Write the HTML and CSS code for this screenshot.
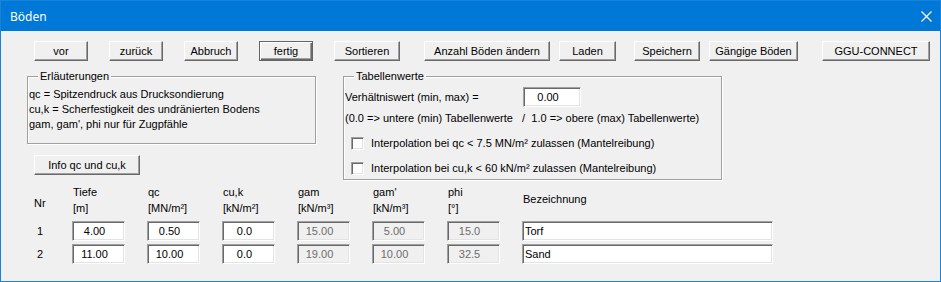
FILE: index.html
```html
<!DOCTYPE html>
<html lang="de">
<head>
    <meta charset="UTF-8">
    <title>Böden</title>
    <link rel="stylesheet" href="styles.css">
</head>
<body>
    <div class="window">
        <div class="titlebar">
            <span class="title">Böden</span>
            <svg class="close" width="11" height="11" viewBox="0 0 11 11">
                <path d="M0.5 0.5 L10.5 10.5 M10.5 0.5 L0.5 10.5" stroke="#fff" stroke-width="1.1" fill="none"/>
            </svg>
        </div>

        <div class="client">
            <div class="toolbar">
                <button class="btn btn-vor">vor</button>
                <button class="btn btn-back">zurück</button>
                <button class="btn btn-cancel">Abbruch</button>
                <button class="btn btn-done is-default">fertig</button>
                <button class="btn btn-sort">Sortieren</button>
                <button class="btn btn-count">Anzahl Böden ändern</button>
                <button class="btn btn-load">Laden</button>
                <button class="btn btn-save">Speichern</button>
                <button class="btn btn-common">Gängige Böden</button>
                <button class="btn btn-connect">GGU-CONNECT</button>
            </div>

            <div class="middle">
                <div class="left-col">
                    <div class="group notes">
                        <span class="group-title">Erläuterungen</span>
                        <div class="line">qc = Spitzendruck aus Drucksondierung</div>
                        <div class="line">cu,k = Scherfestigkeit des undränierten Bodens</div>
                        <div class="line">gam, gam', phi nur für Zugpfähle</div>
                    </div>
                    <button class="btn btn-info">Info qc und cu,k</button>
                </div>

                <div class="group table-values">
                    <span class="group-title">Tabellenwerte</span>
                    <div class="ratio-row">
                        <span class="ratio-label">Verhältniswert (min, max) =</span>
                        <input class="field num ratio" type="text" value="0.00">
                    </div>
                    <div class="line hint">(0.0 =&gt; untere (min) Tabellenwerte &nbsp; / &nbsp;1.0 =&gt; obere (max) Tabellenwerte)</div>
                    <label class="check-row first">
                        <span class="checkbox"></span>
                        Interpolation bei qc &lt; 7.5 MN/m² zulassen (Mantelreibung)
                    </label>
                    <label class="check-row">
                        <span class="checkbox"></span>
                        Interpolation bei cu,k &lt; 60 kN/m² zulassen (Mantelreibung)
                    </label>
                </div>
            </div>

            <div class="soil-table">
                <div class="head head-nr">Nr</div>
                <div class="head">Tiefe<br>[m]</div>
                <div class="head">qc<br>[MN/m²]</div>
                <div class="head">cu,k<br>[kN/m²]</div>
                <div class="head">gam<br>[kN/m³]</div>
                <div class="head">gam'<br>[kN/m³]</div>
                <div class="head">phi<br>[°]</div>
                <div class="head head-name">Bezeichnung</div>

                <div class="row-nr">1</div>
                <input class="field num" type="text" value="4.00">
                <input class="field num" type="text" value="0.50">
                <input class="field num" type="text" value="0.0">
                <input class="field num" type="text" value="15.00" disabled>
                <input class="field num" type="text" value="5.00" disabled>
                <input class="field num" type="text" value="15.0" disabled>
                <input class="field name" type="text" value="Torf">

                <div class="row-nr">2</div>
                <input class="field num" type="text" value="11.00">
                <input class="field num" type="text" value="10.00">
                <input class="field num" type="text" value="0.0">
                <input class="field num" type="text" value="19.00" disabled>
                <input class="field num" type="text" value="10.00" disabled>
                <input class="field num" type="text" value="32.5" disabled>
                <input class="field name" type="text" value="Sand">
            </div>
        </div>
    </div>
</body>
</html>
```

FILE: styles.css
```css
body {
    margin: 0;
    font-family: "Liberation Sans", Arial, sans-serif;
    font-size: 11px;
    color: #000;
    background-color: #f0f0f0;
}
.window {
    width: 941px;
    height: 282px;
    box-sizing: border-box;
    border: 1px solid #1883d7;
    display: flex;
    flex-direction: column;
}
.titlebar {
    height: 30px;
    background-color: #0078d7;
    display: flex;
    align-items: center;
    padding-left: 9px;
}
.title {
    color: #fff;
    font-family: "Noto Sans", "Open Sans", sans-serif;
    font-size: 12px;
}
.close {
    margin-left: auto;
    margin-right: 8px;
}
.client {
    flex: 1;
    background-color: #f0f0f0;
}

/* classic 3d buttons */
.btn {
    height: 20px;
    margin: 0;
    padding: 0;
    font-family: inherit;
    font-size: 11px;
    color: #000;
    background-color: #f0f0f0;
    border: 1px solid;
    border-color: #fff #696969 #696969 #fff;
    box-shadow: inset -1px -1px 0 #a0a0a0;
    box-sizing: border-box;
}
.btn.is-default {
    border-color: #646464;
    box-shadow: inset 1px 1px 0 #fff, inset -1px -1px 0 #696969, inset -2px -2px 0 #a0a0a0;
}
.toolbar {
    display: flex;
    padding-left: 33px;
    margin-top: 10px;
}
.btn-vor { width: 54px; }
.btn-back { width: 54px; margin-left: 21px; }
.btn-cancel { width: 54px; margin-left: 21px; }
.btn-done { width: 54px; margin-left: 21px; }
.btn-sort { width: 66px; margin-left: 21px; }
.btn-count { width: 126px; margin-left: 24px; }
.btn-load { width: 57px; margin-left: 9px; }
.btn-save { width: 66px; margin-left: 18px; }
.btn-common { width: 89px; margin-left: 9px; }
.btn-connect { width: 108px; margin-left: 24px; }

.middle {
    display: flex;
    align-items: flex-start;
    margin-top: 15px;
    padding-left: 26px;
}
.left-col {
    display: flex;
    flex-direction: column;
    align-items: flex-start;
    width: 289px;
}

/* etched group boxes */
.group {
    position: relative;
    box-sizing: border-box;
    border: 1px solid #a0a0a0;
    box-shadow: inset 1px 1px 0 #fff, 1px 1px 0 #fff;
}
.group-title {
    position: absolute;
    top: -8px;
    left: 10px;
    padding: 0 2px;
    line-height: 15px;
    background-color: #f0f0f0;
}
.line {
    line-height: 15px;
    white-space: nowrap;
}
.notes {
    width: 289px;
    height: 68px;
    padding: 10px 0 0 1px;
}
.btn-info {
    width: 106px;
    margin-top: 11px;
    margin-left: 7px;
}
.table-values {
    width: 379px;
    height: 104px;
    margin-left: 27px;
    padding: 10px 0 0 1px;
}
.ratio-row {
    display: flex;
    align-items: center;
    height: 20px;
}
.ratio-label {
    width: 178px;
}
.hint {
    margin-top: 4px;
    white-space: pre;
}
.check-row {
    display: flex;
    align-items: center;
    height: 16px;
    margin-top: 9px;
}
.check-row.first {
    margin-top: 9px;
}
.checkbox {
    width: 13px;
    height: 13px;
    box-sizing: border-box;
    margin-left: 6px;
    margin-right: 7px;
    background-color: #fff;
    border: 1px solid;
    border-color: #a0a0a0 #fff #fff #a0a0a0;
    box-shadow: inset 1px 1px 0 #696969, inset -1px -1px 0 #e3e3e3;
}

/* sunken edit fields */
.field {
    height: 20px;
    margin: 0;
    padding: 0 2px;
    box-sizing: border-box;
    font-family: inherit;
    font-size: 11px;
    color: #000;
    background-color: #fff;
    border: 1px solid;
    border-color: #a0a0a0 #fff #fff #a0a0a0;
    box-shadow: inset 1px 1px 0 #696969, inset -1px -1px 0 #e3e3e3;
    outline: none;
}
.field.num {
    text-align: center;
    padding-right: 10px;
}
.field:disabled {
    background-color: #f0f0f0;
    color: #6d6d6d;
}
.ratio {
    width: 58px;
}

.soil-table {
    display: grid;
    grid-template-columns: 16px repeat(6, 53px) 251px;
    column-gap: 22px;
    row-gap: 3px;
    padding-left: 33px;
    margin-top: 4px;
}
.head {
    line-height: 16px;
    padding: 0 0 2px 1px;
}
.head-nr {
    padding: 11px 0 0 0;
}
.head-name {
    padding-top: 7px;
}
.row-nr {
    line-height: 20px;
    padding-left: 3px;
}
.soil-table .field {
    width: 100%;
}
```
